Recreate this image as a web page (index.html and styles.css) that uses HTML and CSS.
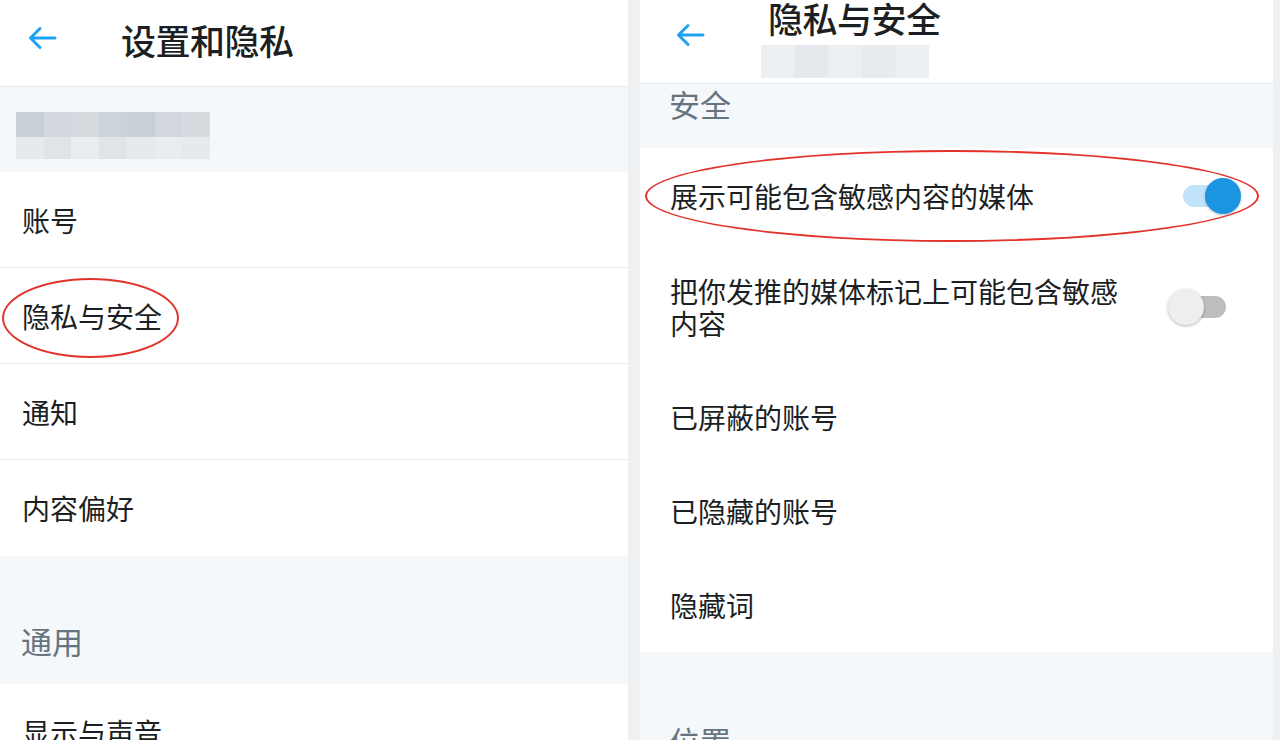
FILE: index.html
```html
<!DOCTYPE html>
<html lang="zh-CN">
<head>
<meta charset="utf-8">
<title>设置和隐私</title>
<link rel="stylesheet" href="styles.css">
</head>
<body>
<div class="screen">
  <section class="panel panel-left">
    <header class="topbar topbar-left">
      <svg class="back" viewBox="0 0 30 26" aria-hidden="true"><path d="M28 13H4M13 3.5L3.5 13L13 22.5" fill="none" stroke="#1da1f2" stroke-width="3" stroke-linecap="round" stroke-linejoin="round"/></svg>
      <h1 class="title">设置和隐私</h1>
    </header>
    <div class="account-band">
      <div class="mosaic">
        <div class="mrow"><span class="m1"></span><span class="m2"></span><span class="m3"></span><span class="m4"></span><span class="m1"></span><span class="m2"></span><span class="m3"></span></div>
        <div class="mrow"><span class="l1"></span><span class="l2"></span><span class="l3"></span><span class="l2"></span><span class="l1"></span><span class="l3"></span><span class="l1"></span></div>
      </div>
    </div>
    <ul class="list list-lined">
      <li class="row">账号</li>
      <li class="row">隐私与安全</li>
      <li class="row">通知</li>
      <li class="row row-last">内容偏好</li>
    </ul>
    <div class="section section-tall">通用</div>
    <ul class="list">
      <li class="row">显示与声音</li>
    </ul>
    <div class="circle circle-left"></div>
  </section>

  <section class="panel panel-right">
    <header class="topbar topbar-right">
      <svg class="back back-right" viewBox="0 0 30 26" aria-hidden="true"><path d="M28 13H4M13 3.5L3.5 13L13 22.5" fill="none" stroke="#1da1f2" stroke-width="3" stroke-linecap="round" stroke-linejoin="round"/></svg>
      <div class="title-block">
        <h1 class="title title-right">隐私与安全</h1>
        <div class="subtitle-blur"><span></span><span></span><span></span><span></span><span></span></div>
      </div>
    </header>
    <div class="section section-short">安全</div>
    <ul class="list">
      <li class="row row-toggle">
        <span class="label">展示可能包含敏感内容的媒体</span>
        <span class="toggle toggle-on"><span class="track"></span><span class="knob"></span></span>
      </li>
      <li class="row row-toggle row-double">
        <span class="label label-wrap">把你发推的媒体标记上可能包含敏感内容</span>
        <span class="toggle toggle-off"><span class="track"></span><span class="knob"></span></span>
      </li>
      <li class="row">已屏蔽的账号</li>
      <li class="row">已隐藏的账号</li>
      <li class="row">隐藏词</li>
    </ul>
    <div class="section section-tall">位置</div>
    <div class="circle circle-right"></div>
  </section>
</div>
</body>
</html>
```

FILE: styles.css
```css
* { box-sizing: border-box; }
html, body { margin: 0; padding: 0; }
body {
  width: 1280px;
  height: 740px;
  overflow: hidden;
  background: #eef0f2;
  font-family: "Noto Sans CJK SC", "Noto Sans", sans-serif;
  color: #1c1f23;
}
.screen {
  display: flex;
  gap: 12px;
  height: 740px;
  overflow: hidden;
}
.panel {
  position: relative;
  background: #f5f8fa;
  height: 740px;
  overflow: hidden;
}
.panel-left { width: 628px; }
.panel-right { width: 633px; }

.topbar {
  background: #fff;
  display: flex;
  border-bottom: 1px solid #e4e9ed;
}
.topbar-left {
  height: 87px;
  align-items: flex-start;
  padding-left: 27px;
}
.back { width: 30px; height: 26px; flex: none; }
.topbar-left .back { margin-top: 25px; }
.title {
  margin: 0;
  font-weight: 500;
  font-size: 35px;
  line-height: 40px;
  letter-spacing: -0.5px;
  color: #1c1f23;
}
.topbar-left .title { margin-left: 64px; margin-top: 20px; }

.account-band {
  height: 85px;
  padding: 25px 0 0 16px;
}
.mosaic { width: 194px; }
.mrow { display: flex; }
.mrow span { flex: 1; }
.mrow:first-child span { height: 25px; }
.mrow:last-child span { height: 22px; }
.m1 { background: #c9cfd6; }
.m2 { background: #d3d8de; }
.m3 { background: #d6dbe0; }
.m4 { background: #cdd3da; }
.l1 { background: #e6eaee; }
.l2 { background: #dfe4e9; }
.l3 { background: #e9edf1; }

.list { list-style: none; margin: 0; padding: 0; background: #fff; }
.row {
  display: flex;
  align-items: center;
  padding-left: 22px;
  font-size: 28px;
  height: 96px;
  color: #1c1f23;
}
.list-lined .row { border-bottom: 1px solid #e6ebef; }
.list-lined .row-last { border-bottom: none; height: 96px; }

.section {
  display: flex;
  align-items: flex-end;
  padding-left: 21px;
  font-size: 31px;
  color: #66747f;
}
.section-tall { height: 128px; padding-bottom: 21px; }

.panel-right .row { padding-left: 30px; height: 94px; }
.topbar-right {
  height: 84px;
  align-items: flex-start;
  padding-left: 35px;
}
.back-right { margin-top: 22px; }
.title-block { margin-left: 63px; }
.title-right { line-height: 36px; margin-top: 0; }
.subtitle-blur {
  display: flex;
  width: 168px;
  height: 33px;
  margin-top: 9px;
  margin-left: -7px;
}
.subtitle-blur span { flex: 1; background: #eceff2; }
.subtitle-blur span:nth-child(2) { background: #e5e8ec; }
.subtitle-blur span:nth-child(4) { background: #e8ebee; }

.section-short { height: 64px; padding-bottom: 0; align-items: flex-start; padding-top: 2px; padding-left: 29px; line-height: 36px; }
.panel-right .section-tall { height: 100px; padding-bottom: 0; align-items: flex-start; padding-top: 66px; padding-left: 29px; }

.row-toggle { justify-content: space-between; padding-right: 32px; }
.panel-right .row-toggle:first-child { height: 95px; }
.panel-right .row-double { height: 127px; padding-right: 47px; }
.label-wrap { width: 460px; line-height: 32px; }

.toggle { position: relative; width: 58px; height: 36px; flex: none; }
.toggle .track {
  position: absolute;
  left: 0;
  right: 6px;
  top: 7px;
  height: 22px;
  border-radius: 11px;
}
.toggle .knob {
  position: absolute;
  top: 0;
  width: 36px;
  height: 36px;
  border-radius: 50%;
}
.toggle-on .track { background: #c2e4fa; }
.toggle-on .knob { right: 0; background: #1b95e0; box-shadow: 0 1px 3px rgba(0,0,0,0.25); }
.toggle-off .track { background: #bdbdbd; left: 6px; right: 0; }
.toggle-off .knob { left: 0; background: #eeeeee; box-shadow: 0 1px 3px rgba(0,0,0,0.3); }

.circle {
  position: absolute;
  border: 2px solid #e2332b;
  border-radius: 50%;
  pointer-events: none;
}
.circle-left { left: 2px; top: 278px; width: 177px; height: 80px; }
.circle-right { left: 5px; top: 150px; width: 614px; height: 92px; }
```
